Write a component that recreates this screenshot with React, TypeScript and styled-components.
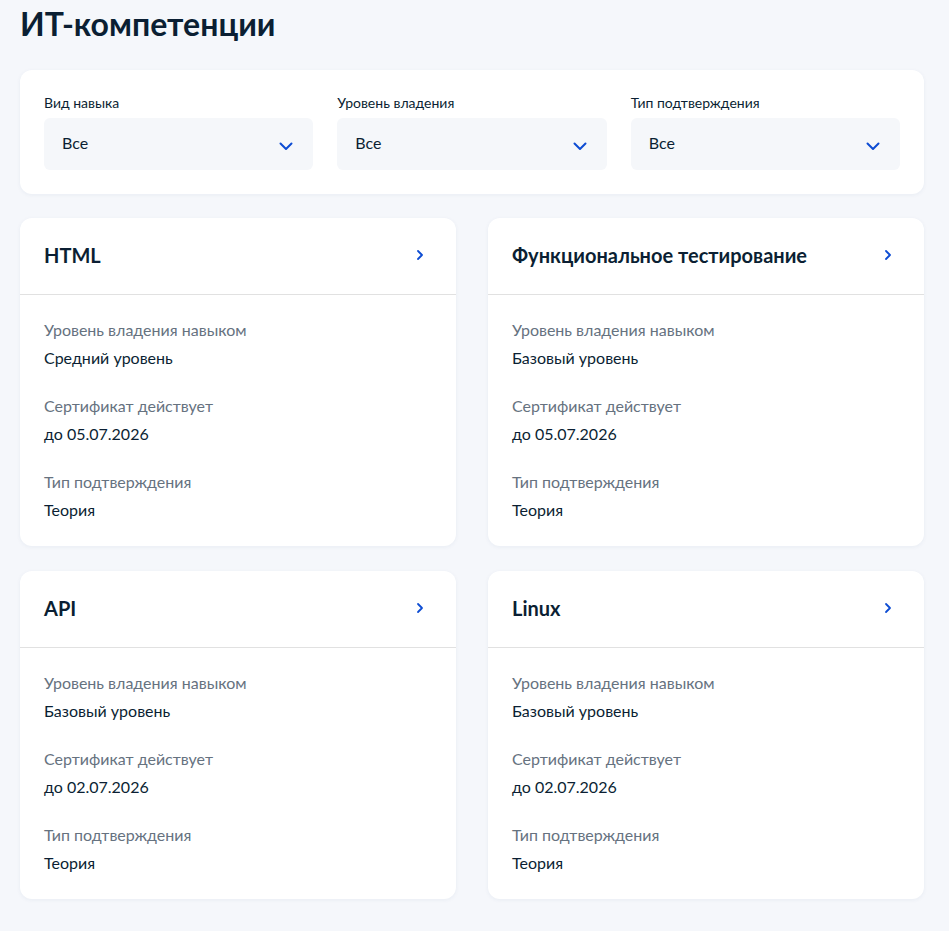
import React from "react";
import styled, { createGlobalStyle } from "styled-components";

const Global = createGlobalStyle`
  html, body { margin: 0; padding: 0; background: #f5f7fb; }
  body { font-family: Lato, "Noto Sans", sans-serif; color: #0b1f33; -webkit-font-smoothing: antialiased; }
  * { box-sizing: border-box; }
`;

const Page = styled.div`
  width: 949px;
  min-height: 931px;
  padding: 4px 25px 32px 20px;
  display: flex;
  flex-direction: column;
  gap: 24px;
`;

const Title = styled.h1`
  margin: 0 0 2px;
  font-size: 32px;
  line-height: 40px;
  font-weight: 700;
  color: #0b1f33;
`;

const Panel = styled.div`
  background: #fff;
  border-radius: 12px;
  box-shadow: 0 1px 4px rgba(40, 60, 120, 0.06);
`;

const Filters = styled(Panel)`
  padding: 23px 24px 24px;
  display: grid;
  grid-template-columns: repeat(3, 1fr);
  gap: 24px;
`;

const Field = styled.div`
  display: flex;
  flex-direction: column;
  gap: 5px;
`;

const FieldLabel = styled.span`
  font-size: 14px;
  line-height: 20px;
  color: #0b1f33;
`;

const Select = styled.div`
  height: 52px;
  background: #f5f7fa;
  border-radius: 6px;
  padding: 0 18px;
  display: flex;
  align-items: center;
  justify-content: space-between;
  font-size: 16px;
  color: #0b1f33;
`;

const SelectValue = styled.span`
  margin-bottom: 4px;
`;

const ChevronBox = styled.span`
  display: flex;
  margin-top: 4px;
  margin-right: 2px;
`;

const Grid = styled.div`
  display: grid;
  grid-template-columns: 1fr 1fr;
  column-gap: 32px;
  row-gap: 25px;
`;

const Card = styled(Panel)`
  display: flex;
  flex-direction: column;
`;

const CardHead = styled.div`
  padding: 23px 26px 25px 24px;
  display: flex;
  align-items: center;
  justify-content: space-between;
  border-bottom: 1px solid #e1e1e1;
`;

const CardTitle = styled.h3`
  margin: 0;
  font-size: 20px;
  line-height: 28px;
  font-weight: 700;
  color: #0b1f33;
`;

const CardBody = styled.div`
  padding: 23px 24px 24px;
  display: flex;
  flex-direction: column;
  gap: 24px;
`;

const Item = styled.div`
  display: flex;
  flex-direction: column;
  gap: 4px;
`;

const ItemLabel = styled.span`
  font-size: 16px;
  line-height: 24px;
  color: #66727f;
`;

const ItemValue = styled.span`
  font-size: 16px;
  line-height: 24px;
  color: #0b1f33;
`;

const ChevronDown = () => (
  <svg width="14" height="9" viewBox="0 0 14 9" fill="none">
    <path d="M1.5 1.5 7 7l5.5-5.5" stroke="#0d4cd3" strokeWidth="2" strokeLinecap="round" strokeLinejoin="round" />
  </svg>
);

const ChevronRight = () => (
  <svg width="20" height="20" viewBox="0 0 20 20" fill="none">
    <path d="M8 6l4 4-4 4" stroke="#0d4cd3" strokeWidth="1.8" strokeLinecap="round" strokeLinejoin="round" />
  </svg>
);

const filters = ["Вид навыка", "Уровень владения", "Тип подтверждения"];

const cards = [
  { title: "HTML", level: "Средний уровень", date: "до 05.07.2026", type: "Теория" },
  { title: "Функциональное тестирование", level: "Базовый уровень", date: "до 05.07.2026", type: "Теория" },
  { title: "API", level: "Базовый уровень", date: "до 02.07.2026", type: "Теория" },
  { title: "Linux", level: "Базовый уровень", date: "до 02.07.2026", type: "Теория" },
];

export default function App() {
  return (
    <>
      <Global />
      <Page>
        <Title>ИТ-компетенции</Title>
        <Filters>
          {filters.map((f) => (
            <Field key={f}>
              <FieldLabel>{f}</FieldLabel>
              <Select>
                <SelectValue>Все</SelectValue>
                <ChevronBox>
                  <ChevronDown />
                </ChevronBox>
              </Select>
            </Field>
          ))}
        </Filters>
        <Grid>
          {cards.map((c) => (
            <Card key={c.title}>
              <CardHead>
                <CardTitle>{c.title}</CardTitle>
                <ChevronRight />
              </CardHead>
              <CardBody>
                <Item>
                  <ItemLabel>Уровень владения навыком</ItemLabel>
                  <ItemValue>{c.level}</ItemValue>
                </Item>
                <Item>
                  <ItemLabel>Сертификат действует</ItemLabel>
                  <ItemValue>{c.date}</ItemValue>
                </Item>
                <Item>
                  <ItemLabel>Тип подтверждения</ItemLabel>
                  <ItemValue>{c.type}</ItemValue>
                </Item>
              </CardBody>
            </Card>
          ))}
        </Grid>
      </Page>
    </>
  );
}
